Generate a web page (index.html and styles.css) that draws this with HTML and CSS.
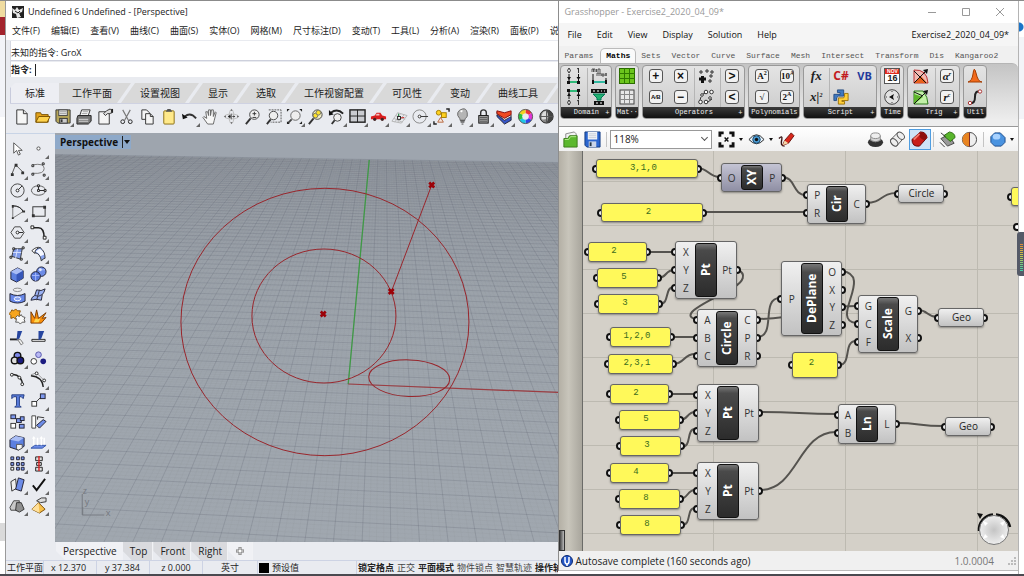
FILE: index.html
```html
<!DOCTYPE html>
<html lang="en">
<head>
<meta charset="utf-8">
<title>Undefined 6 Undefined - [Perspective]</title>
<link rel="stylesheet" href="styles.css">
</head>
<body>
<div class="desktop">
<div class="edge edge-left"><i class="chip tan"></i><i class="chip red"></i><i class="chip pale"></i><i class="fill"></i><i class="chip grey"></i></div>

<main class="rhino">
  <header class="titlebar">
    <svg class="logo" viewBox="0 0 14 14"><rect x="1" y="1" width="12" height="12" fill="#222"/><path d="M1 3l3 2 2-3 2 3 4-2-1 4-3 1 2 4-4 1-1-4-3-1z" fill="#e8e8e8"/><path d="M4 6l3 2 2-2M3 11l2-2M9 10l3 2" stroke="#222" fill="none"/></svg>
    <span>Undefined 6 Undefined - [Perspective]</span>
  </header>
  <nav class="menu">
    <button>文件(F)</button><button>编辑(E)</button><button>查看(V)</button><button>曲线(C)</button><button>曲面(S)</button><button>实体(O)</button><button>网格(M)</button><button>尺寸标注(D)</button><button>变动(T)</button><button>工具(L)</button><button>分析(A)</button><button>渲染(R)</button><button>面板(P)</button><button>说明(H)</button>
  </nav>
  <section class="command">
    <p class="history">未知的指令: GroX</p>
    <div class="prompt"><label for="cmd">指令:</label><i class="caret"></i><input id="cmd" type="text"></div>
  </section>
  <nav class="tabs">
    <button class="tab on">标准</button><button class="tab first">工作平面</button><button class="tab">设置视图</button><button class="tab">显示</button><button class="tab">选取</button><button class="tab">工作视窗配置</button><button class="tab">可见性</button><button class="tab">变动</button><button class="tab">曲线工具</button><button class="tab">曲面工具</button>
  </nav>
  <div class="toolbar">
    <button aria-label="New"><svg viewBox="0 0 18 18"><path d="M4 2h7l4 4v11H4z" fill="#f6f6f6" stroke="#333"/><path d="M11 2v4h4" fill="#ddd" stroke="#333"/></svg></button>
    <button aria-label="Open"><svg viewBox="0 0 18 18"><path d="M2 5h5l1 2h7v8H2z" fill="#e3a21a" stroke="#7a5200"/><path d="M5 9h12l-3 6H2z" fill="#ffd34d" stroke="#7a5200"/></svg></button>
    <button aria-label="Save" class="more"><svg viewBox="0 0 18 18"><path d="M1 2h15v14H3l-2-2z" fill="#b5a55a" stroke="#333"/><rect x="4" y="2" width="9" height="6" fill="#e9e9e9" stroke="#444"/><path d="M5 4h7M5 6h7" stroke="#999"/><rect x="5" y="11" width="8" height="5" fill="#ccc" stroke="#333"/><path d="M7 12v3" stroke="#333" stroke-width="2"/></svg></button>
    <button aria-label="Print"><svg viewBox="0 0 18 18"><path d="M6 2h9l-2 6H4z" fill="#fff" stroke="#333"/><path d="M2 8h14v6l-3 3H1v-6z" fill="#777" stroke="#222"/><path d="M3 12h10M3 14h10" stroke="#ddd"/><path d="M7 4h6M6 6h6" stroke="#999"/></svg></button>
    <button aria-label="Properties"><svg viewBox="0 0 18 18"><path d="M2 4h11v13H2z" fill="#f4f4f4" stroke="#333"/><path d="M7 6l3-3 4-2 2 2v2l-3 1-2 0-2 2z" fill="#ddd" stroke="#333"/><rect x="15" y="1" width="2" height="4" fill="#222"/></svg></button>
    <button aria-label="Cut"><svg viewBox="0 0 18 18"><path d="M5 2l6 11M13 2L7 13" stroke="#777" stroke-width="1.200"/><circle cx="5" cy="14.500" r="2" fill="none" stroke="#222"/><circle cx="13" cy="14.500" r="2" fill="none" stroke="#222"/></svg></button>
    <button aria-label="Copy"><svg viewBox="0 0 18 18"><path d="M3 2h5l3 3v7H3z" fill="#f5f5f5" stroke="#333"/><path d="M7 6h5l3 3v8H7z" fill="#f5f5f5" stroke="#333"/><path d="M12 6v3h3" fill="none" stroke="#333"/></svg></button>
    <button aria-label="Paste"><svg viewBox="0 0 18 18"><rect x="4" y="3" width="11" height="14" rx="1" fill="#ffe98a" stroke="#8a6d10"/><path d="M6 4l2-3h3l2 3z" fill="#555"/></svg></button>
    <button aria-label="Undo" class="more"><svg viewBox="0 0 18 18"><path d="M4 9Q10 4 16 11" fill="none" stroke="#333" stroke-width="2"/><path d="M1 6l1 6 5-2z" fill="#111"/></svg></button>
    <button aria-label="Pan"><svg viewBox="0 0 18 18"><path d="M6 17l-5-7 1-1 3 2-1-7 2 0 1 4 0-6h2l0 6 1-6h2l0 7 2-5 1 1-2 8-1 4z" fill="#f6f6f6" stroke="#666"/></svg></button>
    <button aria-label="Rotate view"><svg viewBox="0 0 18 18"><ellipse cx="9" cy="9" rx="7.500" ry="2.500" fill="none" stroke="#bbb"/><ellipse cx="9" cy="9" rx="2.500" ry="7.500" fill="none" stroke="#bbb"/><path d="M9 6v6M6 9h6" stroke="#777"/><path d="M5 9l3-2v4zM13 9l-2-1v2z" fill="#222"/><path d="M1 9l2-1v2zM17 9l-2-1v2zM9 1l1 2-2 0zM9 17l-1-2h2z" fill="#555"/></svg></button>
    <button aria-label="Zoom"><svg viewBox="0 0 18 18"><circle cx="11" cy="7" r="5" fill="#eee" stroke="#444"/><path d="M7 11l-5 6" stroke="#333" stroke-width="2"/><path d="M9 6h4M11 4v4M9 10h4" stroke="#333"/></svg></button>
    <button aria-label="Zoom window"><svg viewBox="0 0 18 18"><path d="M4 2h13v13H6" fill="none" stroke="#555" stroke-dasharray="2 1"/><circle cx="9" cy="8" r="4.500" fill="#eee" stroke="#444"/><path d="M6 12l-4 5" stroke="#333" stroke-width="2"/></svg></button>
    <button aria-label="Zoom extents" class="more"><svg viewBox="0 0 18 18"><circle cx="10" cy="8" r="5" fill="#eee" stroke="#666"/><path d="M6 12l-4 4" stroke="#444" stroke-width="2"/><path d="M1 4V1h3zM17 4V1h-3zM1 14v3h3zM17 14v3h-3z" fill="#222"/></svg></button>
    <button aria-label="Zoom selected"><svg viewBox="0 0 18 18"><circle cx="11" cy="7" r="5" fill="#f2eec8" stroke="#444"/><circle cx="9" cy="8" r="2.500" fill="#fde12d" stroke="#776"/><circle cx="12" cy="5" r="2.500" fill="#fde12d" stroke="#776"/><path d="M7 11l-5 6" stroke="#333" stroke-width="2"/></svg></button>
    <button aria-label="Undo view" class="more"><svg viewBox="0 0 18 18"><path d="M3 5Q10 0 16 6" fill="none" stroke="#222" stroke-width="2"/><path d="M1 2v6l5-1z" fill="#111"/><circle cx="10" cy="10" r="4" fill="#eee" stroke="#444"/><path d="M7 13l-3 4" stroke="#333" stroke-width="2"/></svg></button>
    <button aria-label="Four views" class="more"><svg viewBox="0 0 18 18"><rect x="1" y="2" width="16" height="13" fill="#c9cbd0" stroke="#222" stroke-width="1.500"/><path d="M9 2v13M1 8.500h16" stroke="#222"/></svg></button>
    <button aria-label="Right view" class="more"><svg viewBox="0 0 18 18"><path d="M1 9l4-1 2-3h4l2 3 4 1v3H1z" fill="#d91e1e"/><path d="M7 6h3v2H6z" fill="#f5c3c3"/><circle cx="5" cy="12" r="1.700" fill="#422"/><circle cx="13" cy="12" r="1.700" fill="#422"/></svg></button>
    <button aria-label="Named CPlane" class="more"><svg viewBox="0 0 18 18"><path d="M1 14L7 5l10 3-6 8zM3 11l9 4M5 8l10 4M10 6l-6 9M14 7l-7 8" fill="none" stroke="#b5b5b5"/><path d="M8 10V6" stroke="#1a8a3a"/><path d="M8 11l6-1" stroke="#c22"/><rect x="7" y="9" width="3" height="3" fill="#fff" stroke="#222"/></svg></button>
    <button aria-label="Osnap" class="more"><svg viewBox="0 0 18 18"><circle cx="8" cy="9" r="7" fill="none" stroke="#888"/><circle cx="8" cy="9" r="1.500" fill="#fff" stroke="#333"/><path d="M9 9h8" stroke="#333"/></svg></button>
    <button aria-label="Select" class="more"><svg viewBox="0 0 18 18"><circle cx="6" cy="5" r="2.500" fill="#ffd21f" stroke="#a37a00"/><rect x="9" y="5" width="5" height="5" fill="#ffd21f" stroke="#a37a00"/><path d="M5 15l3-5 3 5z" fill="#f8e9df" stroke="#b5653d"/><path d="M14 1h3v3M1 14v3h3" fill="none" stroke="#222" stroke-width="1.500"/></svg></button>
    <button aria-label="Show" class="more"><svg viewBox="0 0 18 18"><path d="M6 11Q3 8 4 5t5-4 5 4-2 6l-1 3H7z" fill="#b5b5b5" stroke="#666"/><path d="M7 13h4M7 15h4M8 17h2" stroke="#444"/><path d="M7 4Q8 3 9 3" stroke="#fff" stroke-width="2"/></svg></button>
    <button aria-label="Lock" class="more"><svg viewBox="0 0 18 18"><path d="M6 8V5q0-3 3-3t3 3v3" fill="none" stroke="#333" stroke-width="1.500"/><rect x="4" y="8" width="10" height="8" fill="#a5a5a5" stroke="#111"/><path d="M5 10h8M5 12h8M5 14h8" stroke="#555"/></svg></button>
    <button aria-label="Layers" class="more"><svg viewBox="0 0 18 18"><path d="M1 9l8 8 7-4V9l-7 4-8-6z" fill="#3656c8" stroke="#223"/><path d="M1 6l8 7 7-4V7l-7 3-8-6z" fill="#f4f4f4" stroke="#445"/><path d="M1 3l8 2 7-2v4l-7 4-8-5z" fill="#f04a22" stroke="#811"/></svg></button>
    <button aria-label="Material" class="more"><svg viewBox="0 0 18 18"><g fill="none" stroke-width="4"><path d="M9 3.500A5.500 5.500 0 0 1 13.800 6.200" stroke="#e33"/><path d="M13.800 6.200A5.500 5.500 0 0 1 13.800 11.800" stroke="#e334d8"/><path d="M13.800 11.800A5.500 5.500 0 0 1 9 14.500" stroke="#3344e8"/><path d="M9 14.500A5.500 5.500 0 0 1 4.200 11.800" stroke="#1cc8e8"/><path d="M4.200 11.800A5.500 5.500 0 0 1 4.200 6.200" stroke="#2bc23a"/><path d="M4.200 6.200A5.500 5.500 0 0 1 9 3.500" stroke="#f2d21f"/></g><circle cx="9" cy="9" r="7.500" fill="none" stroke="#555"/></svg></button>
    <button aria-label="Render"><svg viewBox="0 0 18 18"><circle cx="9" cy="9" r="7" fill="#888" stroke="#222"/><path d="M9 2a7 7 0 0 1 0 14q4-7 0-14z" fill="#444"/><path d="M6 4q-3 3-2 8 5 1 6-2T9 3z" fill="#ddd"/><path d="M2 9h14M9 2v14" stroke="#555"/></svg></button>
  </div>
  <div class="work">
    <aside class="side">
      <button aria-label="Pointer"><svg viewBox="0 0 18 18"><path d="M5 3v11l3-3 2 5 2-1-2-4h4z" fill="#fff" stroke="#555"/></svg></button>
      <button aria-label="Point" class="more"><svg viewBox="0 0 18 18"><circle cx="9" cy="9" r="1.700" fill="#fff" stroke="#555"/></svg></button>
      <button aria-label="Polyline" class="more"><svg viewBox="0 0 18 18"><path d="M3 14L7 4l8 8" fill="none" stroke="#555"/><path d="M2 13h3v3H2zM6 3h3v3H6zM13 11h3v3h-3z" fill="#333"/></svg></button>
      <button aria-label="Curve" class="more"><svg viewBox="0 0 18 18"><path d="M3 4q12-2 12 4t-12 5" fill="none" stroke="#777"/><g fill="#fff" stroke="#222"><path d="M2 4h2v2H2zM13 2h2v2h-2zM2 13h2v2H2zM14 14h2v2h-2z"/></g></svg></button>
      <button aria-label="Circle" class="more"><svg viewBox="0 0 18 18"><circle cx="9" cy="9" r="7" fill="none" stroke="#444"/><path d="M9 9l5-5" stroke="#222"/><circle cx="9" cy="9" r="1.500" fill="#fff" stroke="#222"/></svg></button>
      <button aria-label="Ellipse" class="more"><svg viewBox="0 0 18 18"><ellipse cx="9" cy="9" rx="7.500" ry="5" fill="none" stroke="#555"/><path d="M9 4v5h7" fill="none" stroke="#222"/><g fill="#fff" stroke="#222"><path d="M8 3h2v2H8zM8 8h2v2H8zM15 8h2v2h-2z"/></g></svg></button>
      <button aria-label="Arc" class="more"><svg viewBox="0 0 18 18"><path d="M4 3q8 0 11 6L4 16z" fill="none" stroke="#777"/><path d="M4 3q8 0 11 6" fill="none" stroke="#222"/><path d="M3 2h2v3H3zM14 8h3v2h-3zM3 15h2v2H3z" fill="#333"/></svg></button>
      <button aria-label="Rectangle" class="more"><svg viewBox="0 0 18 18"><rect x="3" y="4" width="13" height="10" fill="none" stroke="#333"/><path d="M2 12h3v3H2zM14 3h3v3h-3z" fill="#333"/></svg></button>
      <button aria-label="Polygon" class="more"><svg viewBox="0 0 18 18"><path d="M6 3h6l4 6-4 6H6L2 9z" fill="none" stroke="#444"/><path d="M9 9h6" stroke="#222"/><circle cx="9" cy="9" r="1.500" fill="#fff" stroke="#222"/></svg></button>
      <button aria-label="Fillet" class="more"><svg viewBox="0 0 18 18"><path d="M3 4h6q6 0 6 11" fill="none" stroke="#222" stroke-width="1.700"/><g fill="#fff" stroke="#222"><path d="M1 2h3v3H1zM14 13h3v3h-3z"/></g></svg></button>
      <button aria-label="Surface points" class="more"><svg viewBox="0 0 18 18"><path d="M5 4l9 0-2 11-9-3z" fill="#7f9ae8" stroke="#333"/><path d="M4 8h9M9 4L7 14" stroke="#dbe4ff"/><g fill="#fff" stroke="#222"><path d="M4 3h2v2H4zM14 2h2v2h-2zM1 12h2v2H1zM12 14h2v2h-2z"/></g></svg></button>
      <button aria-label="Surface edges" class="more"><svg viewBox="0 0 18 18"><path d="M2 6q5-5 9-3-5 1-6 6z" fill="#fff" stroke="#333"/><path d="M11 3q5 4 5 11-2 0-4 3-1-8-7-9 1-5 6-5z" fill="#8aa4ee" stroke="#333"/><path d="M10 4q4 2 5 6l-4 2q-1-3-5-5z" fill="#f6f8ff"/></svg></button>
      <button aria-label="Box" class="more"><svg viewBox="0 0 18 18"><path d="M2 6l7-4 6 3v8l-7 4-6-3z" fill="#5d80e0" stroke="#223"/><path d="M2 6l6 3 7-4-6-3z" fill="#a9bdf5"/><path d="M8 9v8l7-4V5z" fill="#3656b8"/></svg></button>
      <button aria-label="Sphere" class="more"><svg viewBox="0 0 18 18"><circle cx="12" cy="6" r="5" fill="#6c8be6" stroke="#223"/><circle cx="6" cy="11" r="5" fill="#5878dc" stroke="#223"/><path d="M2 10h8M6 7v9M9 4h7" stroke="#a9bcff"/><circle cx="11" cy="4" r="1.500" fill="#dfe7ff"/></svg></button>
      <button aria-label="Extract" class="more"><svg viewBox="0 0 18 18"><ellipse cx="9" cy="3" rx="4.500" ry="1.800" fill="#eee" stroke="#888"/><path d="M1 7q8 4 16 0v8q-8 4-16 0z" fill="#6888e8" stroke="#223"/><ellipse cx="9" cy="12.500" rx="3.500" ry="2" fill="#8aa4ee" stroke="#fff"/></svg></button>
      <button aria-label="Patch" class="more"><svg viewBox="0 0 18 18"><path d="M1 14q1-4 4-5l2-6q5 2 9-1-1 4-3 6l-1 6q-5-2-11 0z" fill="#9ab1f4" stroke="#223"/><path d="M5 9q4 2 8-1M10 3L7 14" stroke="#334" fill="none"/></svg></button>
      <button aria-label="Explode group"><svg viewBox="0 0 18 18"><path d="M3 2l2 1 2-2 2 2 3 0-1 3 1 3-3 0-2 3-2-2-3 1 0-3-2-2 2-2z" fill="#f7a51d" stroke="#854f00"/><path d="M9 8l2 1 2-2 1 2 3 1-1 2 1 3-3 0-2 2-2-2-3 0 1-3-1-2z" fill="#f8f8f8" stroke="#555"/></svg></button>
      <button aria-label="Explode"><svg viewBox="0 0 18 18"><path d="M1 16V4l4 7 2-9 2 9 8-6-4 6 4-1-5 6z" fill="#f98f0c" stroke="#7a3a00"/><path d="M4 15l2-4 2 1 3-1-2 4z" fill="#ffd84d"/></svg></button>
      <button aria-label="Trim"><svg viewBox="0 0 18 18"><path d="M1 11h9" stroke="#222" stroke-width="2"/><path d="M9 2h5l-3 8-3 2z" fill="#2746a0"/><path d="M9 11l3 0 3 4-2 2z" fill="#eee" stroke="#777"/></svg></button>
      <button aria-label="Split"><svg viewBox="0 0 18 18"><path d="M2 13h14v-2H2z" fill="#fff" stroke="#222"/><path d="M9 2h6l-3 8-3 2z" fill="#2746a0"/></svg></button>
      <button aria-label="Join" class="more"><svg viewBox="0 0 18 18"><g stroke="#111" stroke-width="1.500"><circle cx="9" cy="6" r="3.500" fill="#7d88e8"/><circle cx="6" cy="11" r="3.500" fill="#ddd"/><circle cx="12" cy="11" r="3.500" fill="#1b1b80"/></g></svg></button>
      <button aria-label="Group"><svg viewBox="0 0 18 18"><circle cx="9" cy="5" r="3" fill="#b8b8f4" stroke="#55a"/><circle cx="4" cy="12" r="3" fill="#fff" stroke="#333"/><circle cx="14" cy="12" r="3" fill="#1b1b80"/></svg></button>
      <button aria-label="Edit points"><svg viewBox="0 0 18 18"><path d="M2 4q10-2 13 11" fill="none" stroke="#222" stroke-width="1.500"/><g fill="#fff" stroke="#222"><circle cx="3" cy="4" r="1.500"/><circle cx="11" cy="7" r="1.500"/><circle cx="14" cy="14" r="1.500"/></g></svg></button>
      <button aria-label="Control points" class="more"><svg viewBox="0 0 18 18"><path d="M1 5q12 1 13 12" fill="none" stroke="#222" stroke-width="1.500"/><path d="M1 4l6-2 8 8" fill="none" stroke="#999"/><g fill="#fff" stroke="#222"><circle cx="7" cy="2.500" r="1.500"/><circle cx="15" cy="10" r="1.500"/></g></svg></button>
      <button aria-label="Text"><svg viewBox="0 0 18 18"><path d="M3 3h13l-1 4-2-2h-2v9l2 2H6l2-2V5H5L3 7z" fill="#5d80e0" stroke="#223a80"/></svg></button>
      <button aria-label="Move" class="more"><svg viewBox="0 0 18 18"><path d="M6 11l5-5" stroke="#333"/><rect x="2" y="10" width="5" height="5" fill="#fff" stroke="#333"/><rect x="11" y="2" width="5" height="5" fill="#7d98ee" stroke="#223"/></svg></button>
      <button aria-label="Array"><svg viewBox="0 0 18 18"><g fill="#7d98ee" stroke="#223"><rect x="2" y="2" width="5" height="4"/><rect x="8" y="6" width="5" height="4"/><rect x="12" y="4" width="4" height="4"/><rect x="11" y="12" width="5" height="4"/></g><rect x="2" y="11" width="5" height="5" fill="#fff" stroke="#333"/></svg></button>
      <button aria-label="Orient"><svg viewBox="0 0 18 18"><path d="M2 3h4v13H2z" fill="#fff" stroke="#444"/><path d="M8 4l7 1M8 4v3" stroke="#333"/><path d="M7 13l7-6 3 2-7 7z" fill="#6d8ce8" stroke="#223"/></svg></button>
      <button aria-label="Solid edit" class="more"><svg viewBox="0 0 18 18"><path d="M1 6l6-4 9 2v9l-6 4-9-3z" fill="#5d80e0" stroke="#223"/><path d="M1 6l9 2 6-4-9-2z" fill="#a9bdf5"/><path d="M8 11h6v4l-4 2-2-1z" fill="#f4f4f4" stroke="#555"/></svg></button>
      <button aria-label="Extrude" class="more"><svg viewBox="0 0 18 18"><path d="M1 15l4-3h12l-4 3z" fill="#6d8ce8" stroke="#35a"/><path d="M4 12V4M8 12V4M12 12V4M15 11V4" stroke="#fff" stroke-width="1.500"/><path d="M2 5l2-3 2 3zM10 5l2-3 2 3z" fill="#fff"/></svg></button>
      <button aria-label="Grid array" class="more"><svg viewBox="0 0 18 18"><g fill="#7d98ee" stroke="#223"><path d="M2 2h3v3H2zM8 2h3v3H8zM13 2h3v3h-3zM2 8h3v3H2zM8 8h3v3H8zM13 8h3v3h-3zM8 13h3v3H8zM13 13h3v3h-3z"/></g><path d="M2 13h3v3H2z" fill="#fff" stroke="#222"/></svg></button>
      <button aria-label="Align" class="more"><svg viewBox="0 0 18 18"><g fill="#ddd" stroke="#222"><path d="M6 2h7v4H6zM7 8h5v3H7zM6 13h7v4H6z"/></g><path d="M9.500 1v16" stroke="#d22" stroke-width="1.500"/></svg></button>
      <button aria-label="Flow" class="more"><svg viewBox="0 0 18 18"><path d="M2 6l5-3 1 10-5 3z" fill="#eee" stroke="#333"/><path d="M10 2l6 2-3 12-6-2z" fill="#6d8ce8" stroke="#223"/></svg></button>
      <button aria-label="Check" class="more"><svg viewBox="0 0 18 18"><path d="M3 10l4 5 9-12" fill="none" stroke="#111" stroke-width="2"/></svg></button>
      <button aria-label="Mesh" class="more"><svg viewBox="0 0 18 18"><path d="M1 11l4-7 6 0-2 10-7 0z" fill="#c8c8c8" stroke="#444"/><path d="M8 6l5 0 3 7-5 3-4-2z" fill="#8f8f8f" stroke="#333"/></svg></button>
      <button aria-label="Dimension" class="more"><svg viewBox="0 0 18 18"><path d="M2 13l7-7 7 7-6 4z" fill="#f7c04a" stroke="#7a4a00"/><path d="M9 6l1 11-8-4z" fill="#ffe09a"/><path d="M7 4l5-3h5v4l-6 1z" fill="#ddd" stroke="#333"/></svg></button>
    </aside>
    <section class="view">
      <svg class="scene" viewBox="55 133 504 409" preserveAspectRatio="xMidYMid slice">
        <defs><linearGradient id="ground" x2="0" y2="1"><stop offset="0" stop-color="#979da5"/><stop offset=".35" stop-color="#9da4ac"/><stop offset="1" stop-color="#a0a7af"/></linearGradient></defs>
        <rect x="55" y="133" width="504" height="409" fill="#9ea5ae"/>
        <path d="M55 155L559 163V542H55z" fill="url(#ground)"/>
        <path id="minor" class="minor"/><path id="major" class="major"/>
        <path d="M348.500 384L369.500 160" stroke="#3f9a45" stroke-width="1.300"/>
        <path d="M348.500 384L559 392.500" stroke="#9c3d42" stroke-width="1.200"/>
        <g fill="none" stroke="#99262c" stroke-width="1">
          <ellipse cx="325.200" cy="322" rx="144" ry="133.700"/>
          <ellipse cx="324.200" cy="316" rx="72" ry="67"/>
          <ellipse cx="409.500" cy="378.200" rx="40.500" ry="18.300" transform="rotate(2 409 378)"/>
          <path d="M432 185L391.500 292"/>
        </g>
        <path d="M429.500 182.500l5 5m0-5l-5 5M389 289l5 5m0-5l-5 5M321 311.500l5 5m0-5l-5 5" stroke="#9c0208" stroke-width="2.600"/>
        <path d="M82.500 494v21h22M83 515v-8" fill="none" stroke="#777b82"/>
        <g class="axis"><text x="83" y="494">z</text><text x="85" y="505">y</text><text x="106" y="516">x</text></g>
      </svg>
      <button class="viewname">Perspective<i></i><svg viewBox="0 0 6 4"><path d="M0 0h6L3 4z" fill="#111"/></svg></button>
    </section>
  </div>
  <nav class="viewtabs"><button class="on">Perspective</button><button>Top</button><button>Front</button><button>Right</button><button class="plus" aria-label="Add"><svg viewBox="0 0 8 8"><path d="M3 0h2v3h3v2H5v3H3V5H0V3h3z" fill="#fff" stroke="#777"/></svg></button></nav>
  <footer class="status">
    <span class="s1">工作平面</span><span class="s2">x 12.370</span><span class="s3">y 37.384</span><span class="s4">z 0.000</span><span class="s5">英寸</span><span class="s6"><i></i>预设值</span>
    <span class="snap"><b>锁定格点</b><em>正交</em><b>平面模式</b><em>物件锁点</em><em>智慧轨迹</em><b>操作轴</b></span>
  </footer>
</main>

<section class="gh">
  <header class="ghtitle"><span>Grasshopper - Exercise2_2020_04_09*</span>
    <button aria-label="Minimize"><svg viewBox="0 0 10 10"><path d="M1 5.500h8" stroke="#999"/></svg></button>
    <button aria-label="Maximize"><svg viewBox="0 0 10 10"><path d="M1.500 1.500h7v7h-7z" fill="none" stroke="#999"/></svg></button>
    <button aria-label="Close"><svg viewBox="0 0 10 10"><path d="M1 1l8 8M9 1L1 9" stroke="#999"/></svg></button>
  </header>
  <nav class="ghmenu"><button>File</button><button>Edit</button><button>View</button><button>Display</button><button>Solution</button><button>Help</button><span>Exercise2_2020_04_09*</span></nav>
  <nav class="ghtabs"><button>Params</button><button class="on">Maths</button><button>Sets</button><button>Vector</button><button>Curve</button><button>Surface</button><button>Mesh</button><button>Intersect</button><button>Transform</button><button>Dis</button><button>Kangaroo2</button></nav>
  <div class="ribbon">
    <section class="group g52"><div class="icons">
      <div class="col"><button aria-label="Bounds"><svg viewBox="0 0 16 16"><path d="M3 0q-3 2.500 0 5 3-2.500 0-5M12.500 0v5M11 1l1.500-1" fill="none" stroke="#333"/><path d="M3 6v7M12.500 6v7" stroke="#111"/><path d="M1 9l2 3 2-3zM10.500 9l2 3 2-3zM1 13h3v3H1zM11 13h3v3h-3z" fill="#111"/><path d="M4 14h7" stroke="#2fb878" stroke-width="2"/></svg></button><button aria-label="Consecutive domains"><svg viewBox="0 0 16 16"><path d="M3 11q-3 2.500 0 5 3-2.500 0-5M12.500 11v5M11 12l1.500-1" fill="none" stroke="#333"/><path d="M3 3v7M12.500 3v7" stroke="#111"/><path d="M1 7l2-3 2 3zM10.500 7l2-3 2 3zM1 0h3v3H1zM11 0h3v3h-3z" fill="#111"/><path d="M4 2h7" stroke="#2fb878" stroke-width="2"/></svg></button></div>
      <div class="col rule"><button aria-label="Min max"><svg viewBox="0 0 16 16"><path d="M1 4V1h3v3M2.500 1v3M5.500 1v3M7 4V1h2v3M6 8V5h4v3M8 5v3M11 8V6h2v2zM14 5l2 3M16 5l-2 3" fill="none" stroke="#333" stroke-width=".8"/><path d="M2 6v9M15 10v5" stroke="#111"/><path d="M1 12h2v4H1zM14 12h2v4h-2z" fill="#111"/><path d="M3 14h11" stroke="#2fb8a0" stroke-width="2"/></svg></button><button aria-label="Remap"><svg viewBox="0 0 16 16"><path d="M0 0h16v4H0zM3 12h10v4H3z" fill="#111"/><path d="M2 2h2M6 2h2M10 2h1M13 2h1M5 14h2M9 14h2" stroke="#fff"/><path d="M2 5h12l-4 4v2H6V9z" fill="#20b070" stroke="#075"/></svg></button></div>
    </div><h2>Domain<i>+</i></h2></section>
    <section class="group g24"><div class="icons"><div class="col"><button aria-label="Matrix"><svg viewBox="0 0 16 16"><rect width="16" height="16" fill="#6cc51d" stroke="#2b6b00" stroke-width="2"/><path d="M5.500 0v16M10.500 0v16M0 5.500h16M0 10.500h16" stroke="#2f7a00"/></svg></button><button aria-label="Matrix display"><svg viewBox="0 0 16 16"><rect x="1" y="1" width="14" height="14" fill="#e8e8e8" stroke="#444"/><path d="M5.500 1v14M10.500 1v14M1 5.500h14M1 10.500h14" stroke="#888"/></svg></button></div></div><h2>Mat··</h2></section>
    <section class="group g102"><div class="icons">
      <div class="col"><button class="key">+</button><button class="key small">A⁄B</button></div>
      <div class="col"><button class="key">×</button><button class="key">−</button></div>
      <div class="col rule"><button aria-label="Mass addition"><svg viewBox="0 0 16 16"><path d="M1 11h7M4.500 8v7" stroke="#111" stroke-width="3"/><path d="M1 4h4M3 2v4M7 3h4M9 1v4M12 4h4M14 2v4M11 8h4M13 6v4M10 13h4M12 11v4" stroke="#333"/></svg></button><button aria-label="Gate"><svg viewBox="0 0 16 16"><g fill="#fff" stroke="#333"><circle cx="8" cy="3" r="1.800"/><circle cx="13.500" cy="3" r="1.800"/><circle cx="4" cy="6" r="1.300"/><circle cx="2.500" cy="13" r="1.800"/><circle cx="8" cy="13" r="1.800"/><circle cx="12" cy="9" r="1.300"/></g><path d="M10 13l4-3M5 5l2-1M2 11l1-3" stroke="#333"/></svg></button></div>
      <div class="col rule"><button class="key">&gt;</button><button class="key">&lt;</button></div>
    </div><h2>Operators<i>+</i></h2></section>
    <section class="group g52"><div class="icons"><div class="col"><button class="key serif">A<sup>2</sup></button><button class="key serif">√</button></div><div class="col"><button class="key serif">10<sup>A</sup></button><button class="key serif">2<sup>A</sup></button></div></div><h2>Polynomials</h2></section>
    <section class="group g73"><div class="icons">
      <div class="col"><button class="fx">fx</button><button class="fx">x|<sup>2</sup></button></div>
      <div class="col rule"><button class="cs">C#</button><button aria-label="Python"><svg viewBox="0 0 18 18"><path d="M5 1h7v7H6l-2 2v3H1V6h7V4H5z" fill="#3f78c0" stroke="#234b80"/><path d="M13 5h4v8h-7v1h3v3H6v-7h6l1-2z" fill="#ffcf3a" stroke="#9a6f00"/></svg></button></div>
      <div class="col"><button class="vb">VB</button></div>
    </div><h2>Script<i>+</i></h2></section>
    <section class="group g24"><div class="icons"><div class="col"><button class="cal"><b>NOV</b>16</button><button aria-label="Clock"><svg viewBox="0 0 16 16"><circle cx="8" cy="8" r="7.300" fill="#e2e2e2" stroke="#444"/><path d="M8 2v1M8 13v1M2 8h1M13 8h1" stroke="#444"/><path d="M5 8l5-3-1 3 1 3z" fill="#111"/></svg></button></div></div><h2>Time</h2></section>
    <section class="group g53"><div class="icons"><div class="col"><button aria-label="Right trigonometry"><svg viewBox="0 0 16 16"><path d="M1 2q13-1 14 13H1z" fill="#f3b8b0" stroke="#b33"/><path d="M1 15L8 8l6 7z" fill="#e8601c"/><path d="M1 15L14 2M1 3l12 12" stroke="#111"/><path d="M15 1l-5 1 4 4z" fill="#111"/></svg></button><button aria-label="Triangle trigonometry"><svg viewBox="0 0 16 16"><path d="M1 2h9q5 6 5 13H1z" fill="#c2f0a8" stroke="#2c7a1a"/><path d="M1 5l9 3-9 7z" fill="#5db52a"/><path d="M1 15L14 2M1 3l9 4" stroke="#111"/><path d="M15 1l-5 1 4 4z" fill="#111"/></svg></button></div><div class="col rule"><button class="key greek">α<sup>r</sup></button><button class="key greek">r<sup>c</sup></button></div></div><h2>Trig<i>+</i></h2></section>
    <section class="group g24"><div class="icons"><div class="col"><button aria-label="Bell curve"><svg viewBox="0 0 16 16"><path d="M1 14q4-1 5-8 1-9 3-1 2 9 6 9z" fill="#f26a1b" stroke="#a33c00"/></svg></button><button aria-label="Interpolate"><svg viewBox="0 0 16 16"><path d="M3 14q5 1 5-6t5-5" fill="none" stroke="#222" stroke-width="2"/><circle cx="3" cy="14" r="1.700" fill="#fff" stroke="#a33"/><circle cx="13" cy="2.500" r="1.700" fill="#fff" stroke="#a33"/></svg></button></div></div><h2>Util</h2></section>
  </div>
  <div class="ghbar">
    <button aria-label="Open file"><svg viewBox="0 0 18 18"><path d="M4 3l9-2 2 2v12H4z" fill="#f2f2f2" stroke="#888"/><path d="M2 8h4l2-3h8v12H2z" fill="#5cb82e" stroke="#3a7a1a"/><path d="M3 9h4l2-3h6" fill="none" stroke="#b4ec8c"/></svg></button>
    <button aria-label="Save file"><svg viewBox="0 0 18 18"><path d="M1 1h16v16H3l-2-2z" fill="#2c66d0" stroke="#123a80"/><rect x="4" y="1" width="10" height="8" fill="#f2f4f8"/><path d="M5 3h8M5 5h8M5 7h8" stroke="#c9ced8"/><rect x="5" y="11" width="8" height="6" fill="#c9d4e8"/><path d="M7 12v4" stroke="#234" stroke-width="2"/></svg></button>
    <i class="sep"></i>
    <div class="combo"><select aria-label="Zoom"><option>118%</option></select></div>
    <button aria-label="Zoom extents"><svg viewBox="0 0 18 18"><path d="M2 6V2h4M12 2h4v4M16 12v4h-4M6 16H2v-4" fill="none" stroke="#111" stroke-width="3"/><path d="M7 7l4 4M11 7l-4 4" stroke="#111" stroke-width="1.500"/></svg></button><i class="drop"></i>
    <button aria-label="Named views"><svg viewBox="0 0 18 18"><path d="M1 9q8-10 16 0-8 9-16 0z" fill="#e6f2fb" stroke="#222"/><circle cx="9" cy="9" r="4" fill="#4b9bd2" stroke="#1c4a70"/><circle cx="9" cy="9" r="1.800" fill="#111"/></svg></button><i class="drop"></i>
    <button aria-label="Sketch"><svg viewBox="0 0 18 18"><path d="M1 8q4-4 3 1-2 7 3 7" fill="none" stroke="#311" stroke-width="1.500"/><path d="M5 15l2-5 7-8 3 3-6 8z" fill="#d9281c" stroke="#6b0f0a"/><path d="M5 15l2-5 4 3z" fill="#f4d7a8"/></svg></button>
    <span class="push"></span>
    <button aria-label="No preview"><svg viewBox="0 0 18 18"><ellipse cx="9" cy="12" rx="8" ry="5" fill="#333"/><path d="M4 5v5q5 3 10 0V5z" fill="#d5d5d5" stroke="#888"/><ellipse cx="9" cy="5" rx="5" ry="3" fill="#eee" stroke="#888"/></svg></button>
    <button aria-label="Wireframe preview"><svg viewBox="0 0 18 18"><g fill="#eee" stroke="#555"><path d="M2 9l8-8 6 6-8 9q-7 0-6-7z"/><ellipse cx="12.500" cy="5" rx="3" ry="4.500" transform="rotate(-45 12.500 5)"/><ellipse cx="5.500" cy="12" rx="3" ry="4.500" transform="rotate(-45 5.500 12)"/></g></svg></button>
    <button aria-label="Shaded preview" class="sel"><svg viewBox="0 0 18 18"><path d="M1 9l9-8q6 0 7 6l-8 9q-8 1-8-7z" fill="#c81e1a" stroke="#600"/><ellipse cx="12.500" cy="5.500" rx="3" ry="4.500" transform="rotate(-45 12.500 5.500)" fill="#8e0e0c"/><path d="M3 9l6-6" stroke="#f47a70" stroke-width="2"/></svg></button>
    <i class="sep"></i>
    <button aria-label="Selected preview"><svg viewBox="0 0 18 18"><path d="M2 8l7 8 7-3-6-9z" fill="#999" stroke="#444"/><path d="M5 5l6-4q6 1 6 6l-5 4z" fill="#58b52b" stroke="#2c6b10"/><path d="M2 2l5 4M1 12l5 5" stroke="#333"/></svg></button>
    <button aria-label="Preview settings"><svg viewBox="0 0 18 18"><circle cx="9" cy="9" r="7.500" fill="#eee" stroke="#444"/><path d="M9 1.500a7.500 7.500 0 0 0 0 15z" fill="#e88420"/><path d="M9 1.500v15" stroke="#722"/></svg></button>
    <i class="sep"></i>
    <button aria-label="Preview mesh"><svg viewBox="0 0 18 18"><path d="M6 2h6l5 5v5l-4 4H6l-4-4V6z" fill="#4a93e0" stroke="#1b4a8a"/><ellipse cx="8" cy="6" rx="4" ry="3" fill="#a8d2ff"/></svg></button><i class="drop"></i>
  </div>
  <div class="canvas">
    <svg class="wires" viewBox="559 151 459 400">
      <path d="M698 168C710 168 709 177 721 177M783 177C797 177 793 195 807 195M704 212H807M867 203C884 203 881 193 898 193"/>
      <path d="M648 252H675M659 278C668 278 666 270 675 270M661 304C671 304 665 287 675 287"/>
      <path d="M739 270C748 274 744 282 735 287L713 299C704 304 682 315 696 319"/>
      <path d="M672 337H696M674 364C686 364 684 354 696 354M758 319C800 319 815 306 857 306M758 337C778 337 761 298 781 298"/>
      <path d="M843 271C875 275 830 320 857 323M840 365C853 365 844 341 857 341M919 310C929 310 928 317 938 317"/>
      <path d="M670 394H696M681 420C689 420 688 412 696 412M683 447C693 447 687 429 696 429"/>
      <path d="M761 412C800 412 800 414 837 414M761 490C799 490 799 432 837 432M898 423C920 423 920 426 944 426"/>
      <path d="M670 473H696M681 499C689 499 688 490 696 490M683 525C693 525 687 508 696 508"/>
    </svg>
    <div class="panel long p1">3,1,0</div><div class="panel long p2">2</div>
    <div class="panel p3">2</div><div class="panel p4">5</div><div class="panel p5">3</div>
    <div class="panel p6">1,2,0</div><div class="panel p7">2,3,1</div><div class="panel p8">2</div>
    <div class="panel p9">2</div><div class="panel p10">5</div><div class="panel p11">3</div>
    <div class="panel p12">4</div><div class="panel p13">8</div><div class="panel p14">8</div>
    <div class="panel p15"></div><i class="grip"></i>

    <div class="node violet n1"><div class="ins"><span>O</span></div><b>XY</b><div class="outs"><span>P</span></div></div>
    <div class="node n2"><div class="ins"><span>P</span><span>R</span></div><b>Cir</b><div class="outs"><span>C</span></div></div>
    <div class="node three n3"><div class="ins"><span>X</span><span>Y</span><span>Z</span></div><b>Pt</b><div class="outs"><span>Pt</span></div></div>
    <div class="node three n4"><div class="ins"><span>A</span><span>B</span><span>C</span></div><b>Circle</b><div class="outs"><span>C</span><span>P</span><span>R</span></div></div>
    <div class="node n5"><div class="ins"><span>P</span></div><b>DePlane</b><div class="outs"><span>O</span><span>X</span><span>Y</span><span>Z</span></div></div>
    <div class="node three n6"><div class="ins"><span>G</span><span>C</span><span>F</span></div><b>Scale</b><div class="outs"><span>G</span><span>X</span></div></div>
    <div class="node three n7"><div class="ins"><span>X</span><span>Y</span><span>Z</span></div><b>Pt</b><div class="outs"><span>Pt</span></div></div>
    <div class="node three n8"><div class="ins"><span>X</span><span>Y</span><span>Z</span></div><b>Pt</b><div class="outs"><span>Pt</span></div></div>
    <div class="node n9"><div class="ins"><span>A</span><span>B</span></div><b>Ln</b><div class="outs"><span>L</span></div></div>
    <div class="param m1">Circle</div><div class="param m2">Geo</div><div class="param m3">Geo</div>
    <svg class="compass" viewBox="0 0 36 36"><defs><radialGradient id="dial"><stop offset="0" stop-color="#c4c4c4"/><stop offset="1" stop-color="#eee"/></radialGradient></defs><path d="M3 20A15.500 15.500 0 0 1 17 3.500M20 3.500A15.500 15.500 0 0 1 34 16" fill="none" stroke="#111" stroke-width="2.500"/><path d="M1 2l6 1-3 5z" fill="#111"/><circle cx="18" cy="19" r="14.500" fill="url(#dial)" stroke="#777"/><path d="M7 10l5 2-3 3zM29 10l-5 2 3 3zM7 28l5-2-3-3zM29 28l-5-2 3-3z" fill="#fff"/></svg>
    <i class="thumb"></i>
  </div>
  <footer class="ghstatus"><svg viewBox="0 0 12 12"><circle cx="6" cy="6" r="5.500" fill="#2458c8" stroke="#0d2a70"/><path d="M4 2v4q0 3 2 3t2-3V2" fill="none" stroke="#fff" stroke-width="1.500"/><circle cx="6" cy="10" r="1" fill="#fff"/></svg><span>Autosave complete (160 seconds ago)</span><em>1.0.0004</em><svg class="size" viewBox="0 0 9 9"><path d="M7 1h2v2H7zM7 4h2v2H7zM7 7h2v2H7zM4 4h2v2H4zM4 7h2v2H4zM1 7h2v2H1z" fill="#bbb"/></svg></footer>
</section>

<div class="edge edge-right"><i class="chip white"></i><i class="chip pale"></i><i class="fill"></i></div>
<div class="meter"><i></i></div>
</div>
<script src="grid.js"></script>
</body>
</html>
```
FILE: styles.css
```css
*,*::before,*::after{box-sizing:border-box}
body{margin:0;font:9px/12px "Open Sans","Noto Sans CJK SC",sans-serif;color:#222;background:#fff}
button{font:inherit;color:inherit;background:none;border:0;padding:0;margin:0;white-space:nowrap}
button svg{display:block}
p,h2{margin:0}
i,em{font-style:normal}
.desktop{position:relative;display:flex;height:100vh;min-height:480px;border-top:1px solid #8b8b8b;border-bottom:2px solid #4a4a50;overflow:hidden}

/* slivers of the windows behind */
.edge{flex:0 0 6px;display:flex;flex-direction:column;background:#fff;overflow:hidden}
.edge-left{border-right:1px solid #9a9a9a}
.edge-right{border-left:1px solid #b4b4b4}
.chip{display:block}
.tan{height:16px;background:#f0dca0}
.red{height:18px;background:#a3242d}
.white{height:36px;background:radial-gradient(circle at 0 26px,#1c74c8 4px,#fff 5px)}
.pale{height:82px;background:#f3f4f8}
.grey{height:18px;margin-bottom:33px;background:#dadada}
.fill{flex:1}

/* modelling window */
.rhino{flex:553 1 0;min-width:0;display:flex;flex-direction:column;background:#e9ebf0;overflow:hidden}
.titlebar{height:21px;display:flex;align-items:center;gap:3px;padding-left:5px;background:#fff;font-size:9px}
.logo{width:14px;height:14px}
.menu{display:flex;gap:11px;height:18px;padding-left:6px;background:#fff;overflow:hidden;align-items:center}
.command{margin-top:1px;margin-left:4px;border-left:1px solid #d5d8e2}
.history{height:20px;line-height:24px;background:#fff;border-bottom:1px solid #cdd0dc}
.prompt{display:flex;align-items:center;height:15px;margin-top:1px;background:#fff;font-weight:bold}
.caret{width:1px;height:12px;margin-left:3px;background:#222}
.prompt input{flex:1;border:0;outline:0;height:12px;padding:0;font:inherit;background:none}
.tabs{display:flex;height:21px;margin:6px 0 0 4px;font-size:10px;line-height:20px;overflow:hidden;border-bottom:1px solid #cfd2e2}
.tab{flex:none;padding:0 19px 0 20px;margin-left:-11px;background:#d9d9d9;clip-path:polygon(15px 0,100% 0,calc(100% - 14px) 100%,1px 100%)}
.tab.on{background:#edeef3;margin:0;padding:0 14px;clip-path:polygon(0 5px,5px 0,100% 0,100% 100%,0 100%);border-left:1px solid #c8cbdc}
.tab.first{margin-left:0;padding-left:13px;clip-path:polygon(0 0,100% 0,calc(100% - 14px) 100%,0 100%)}
.toolbar{display:flex;height:29px;padding:2px 0 0 5px;overflow:hidden}
.toolbar button,.side button{position:relative;flex:none;width:21px;height:21px;padding:2px 1px}
.toolbar svg,.side svg{width:17px;height:17px;margin-left:1px}
.more::after{content:"";position:absolute;right:0;bottom:0;border:2px solid transparent;border-right-color:#666;border-bottom-color:#666}
.work{flex:1;min-height:0;display:flex}
.side{flex:0 0 49px;display:grid;grid-template-columns:21px 21px;grid-auto-rows:21px;align-content:start;padding:4px 1px 0;border-top:1px solid #c8d4e6}
.view{position:relative;flex:1;min-width:0;overflow:hidden}
.scene{display:block;width:100%;height:100%}
.minor{fill:none;stroke:#5d656f;stroke-opacity:.07;stroke-width:.6}
.major{fill:none;stroke:#555d68;stroke-opacity:.28;stroke-width:.8}
.axis{font:9px "Open Sans",sans-serif;fill:#73777e}
.viewname{position:absolute;left:0;top:2px;display:flex;align-items:center;gap:4px;height:14px;padding:0 1px 0 5px;background:#8ea9c9;color:#111;font-weight:bold;font-size:10px}
.viewname i{width:1px;height:12px;background:#222}
.viewname svg{width:6px;height:4px;margin-left:-3px}
.viewtabs{display:flex;height:18px;padding-left:50px;font-size:10px;line-height:18px}
.viewtabs button{padding:0 5px 0 7px;background:#d9dade;border-right:1px solid #f1f2f5;clip-path:polygon(0 0,100% 0,100% 100%,9px 100%,0 50%)}
.viewtabs .on,.viewtabs .plus{background:#f0f1f5}
.viewtabs .plus{padding:0 8px}
.viewtabs svg{width:8px;height:8px}
.status{display:flex;height:14px;line-height:14px;border-top:1px solid #cdd3e4;white-space:nowrap;overflow:hidden}
.status>span{flex:none;border-right:1px solid #cdd3e4;padding:0 1px}
.status .s1{width:38px}
.status .s2{width:53px;padding-left:7px}
.status .s3{width:53px;padding-left:8px}
.status .s4{width:53px;text-align:center}
.status .s5{width:55px;text-align:center}
.status .s6{width:99px;display:flex;gap:3px;align-items:center}
.s6 i{width:10px;height:10px;background:#000}
.status .snap{display:flex;gap:3px;border:0}
.snap em{color:#444}

/* node editor window */
.gh{flex:459 1 0;min-width:0;display:flex;flex-direction:column;background:#f0f0f0;margin-bottom:3px;border-left:1px solid #8d8d8d;overflow:hidden}
.ghtitle{display:flex;align-items:center;height:22px;padding-right:1px;padding-left:5px;background:#fff;color:#999}
.ghtitle span{flex:1}
.ghtitle button{width:34px;padding-left:12px}
.ghtitle svg{width:10px;height:10px}
.ghmenu{display:flex;align-items:center;gap:15px;height:23px;padding:0 9px 0 8px;color:#111;background:#f5f5f5}
.ghmenu span{margin-left:auto}
.ghtabs{display:flex;height:17px;padding:2px 0 0 5px;gap:11px;font:8px/14px "Liberation Mono",monospace;color:#555;overflow:hidden}
.ghtabs .on{background:#fafafa;color:#000;border:1px solid #bbb;border-bottom:0;border-radius:5px 5px 0 0;padding:0 5px;margin:0 -6px 0 -4px;font-weight:bold}
.ribbon{display:flex;gap:3px;height:63px;padding:1px 1px 0;border-top:1px solid #b5b5b5;border-radius:0 6px 0 0;background:linear-gradient(#c4c4c4,#ededed 90%)}
.group{display:flex;flex-direction:column;height:54px;border:1px solid #999;border-radius:4px;overflow:hidden;background:linear-gradient(#e4e4e4,#c9c9c9)}
.g24{flex:0 0 24px}.g52{flex:0 0 52px}.g53{flex:0 0 53px}.g73{flex:0 0 74px}.g102{flex:0 0 103px}
.icons{flex:1;display:flex;justify-content:space-around;padding-top:2px}
.col{display:flex;flex-direction:column;gap:5px;padding:0 3px}
.rule{border-left:1px solid #b5b5b5}
.col button,.col svg{width:16px;height:16px;flex:none}
.col .key{width:14px;height:14px;margin:1px;border:1px solid #555;border-radius:3px;background:#f2f2f2;color:#111;font:bold 12px/11px "Liberation Sans",sans-serif;overflow:hidden}
.col .small{font-size:6px}
.col .serif{font:bold 9px/11px "Liberation Serif",serif}
.col .greek{font:italic bold 11px/10px "Liberation Serif",serif}
.col sup{font-size:6px;line-height:4px;vertical-align:4px}
.col .fx{font:italic bold 13px/14px "Liberation Serif",serif}
.col .cs{font-weight:bold;font-size:12px;color:#c21b20}
.col .vb{font-weight:bold;font-size:11px;color:#233a9c}
.col .cal{border:1px solid #555;background:#fff;font:bold 9px/9px "Liberation Sans",sans-serif}
.cal b{display:block;background:#e02a1c;color:#fff;font-size:5px;line-height:5px}
.group h2{position:relative;height:11px;background:linear-gradient(#3a3a3a,#111);color:#eee;font:7px/10px "Liberation Mono",monospace;text-align:center;white-space:nowrap}
.group h2 i{position:absolute;right:2px;top:1px}
.ghbar{display:flex;align-items:center;height:25px;padding:0 1px 0 1px;border-top:1px solid #999;background:linear-gradient(#fff,#f0f0f0);overflow:hidden}
.ghbar button{flex:none;width:22px;height:21px;padding:2px}
.ghbar svg{width:17px;height:17px}
.ghbar .sel{border:1px solid #4f9de0;background:#cfe4f8;padding:1px}
.sep{width:1px;height:15px;background:#c4c4c4;margin:0 3px 0 2px}
.combo{position:relative;margin-right:4px}
.combo select{display:block;appearance:none;width:102px;height:19px;border:1px solid #999;border-radius:0;background:#fff;font:10px "Open Sans",sans-serif;color:#222;padding:0 2px}
.combo::after{content:"";position:absolute;right:5px;top:5px;width:5px;height:5px;border:solid #555;border-width:0 1px 1px 0;transform:rotate(45deg);pointer-events:none}
.drop{border:3px solid transparent;border-top-color:#111;border-bottom:0;margin:0 3px 0 1px;border-left-width:2px;border-right-width:2px}
.push{flex:1}
.canvas{position:relative;flex:1;min-height:0;isolation:isolate;overflow:hidden;
  background:
  linear-gradient(90deg,#b4b0a5,#c8c5bb 40%,#a9a69d 95%,#6b6b68 96%) 0 0/24px 100% no-repeat,
  linear-gradient(90deg,#bdbab1 1px,transparent 1px) 22px 0/132px 44px,
  linear-gradient(#bdbab1 1px,transparent 1px) 0 30px/132px 44px,#d4d0c8}
.wires{position:absolute;left:-1px;top:0;width:459px;height:400px;z-index:-2;fill:none;stroke:#55534f;stroke-width:2}
.panel,.node,.param{position:absolute;border:1px solid #666;border-radius:3px;box-shadow:0 1px 2px rgba(0,0,0,.35)}
.panel{width:61px;height:20px;background:#fff95a;color:#3a6b1c;font:9px/16px "Liberation Mono",monospace;text-align:center;padding-right:8px}
.panel.long{width:102px;height:19px}
.panel::before,.panel::after,.param::before,.param::after,.ins span::before,.outs span::after,.grip{content:"";position:absolute;z-index:-1;width:8px;height:8px;border:2px solid #111;border-radius:50%;background:#fff}
.panel::before,.param::before{left:-5px;top:5px}
.panel::after,.param::after{right:-5px;top:5px}
.node{display:flex;justify-content:space-between;padding:1px 0;background:linear-gradient(#f0f0f0,#c2c2c2);font:10px/12px "Open Sans",sans-serif;color:#333}
.violet{background:linear-gradient(#c4c4d4,#8f8fa4)}
.node b{flex:0 0 22px;border:1px solid #111;border-radius:3px;background:linear-gradient(0deg,#777,#4a4a4a 12%,#2c2c2c);color:#fff;font-size:12px;line-height:20px;writing-mode:vertical-rl;transform:rotate(180deg);text-align:center}
.ins,.outs{flex:1;display:flex;flex-direction:column;justify-content:space-around;text-align:center}
.ins span,.outs span{position:relative;display:block}
.ins span::before{left:-5px;top:2px}
.outs span::after{right:-5px;top:2px}
.param{width:46px;height:19px;background:linear-gradient(#f0f0f0,#c2c2c2);text-align:center;font:10px/16px "Open Sans",sans-serif;color:#222}
.three{height:58px;width:60px}
.p1{left:37px;top:8px}.p2{left:42px;top:52px}
.p3{left:29px;top:91px}.p4{left:38px;top:117px}.p5{left:39px;top:143px}
.p6{left:51px;top:176px}.p7{left:49px;top:203px;width:65px}
.panel.p8{left:233px;top:201px;width:46px;height:26px;line-height:20px}
.p8::before,.p8::after{top:8px}
.p9{left:51px;top:233px}.p10{left:60px;top:259px}.p11{left:61px;top:285px}
.p12{left:51px;top:312px}.p13{left:60px;top:338px}.p14{left:61px;top:364px}
.p3,.p9,.p12{width:59px}
.p15{left:452px;top:36px;height:19px}
.grip{left:454px;top:72px}
.n1{left:162px;top:12px;width:61px;height:29px}
.n2{left:248px;top:33px;width:59px;height:40px}
.n3{left:116px;top:90px;width:62px}
.n4{left:138px;top:158px}
.n5{left:222px;top:110px;width:61px;height:75px}
.n6{left:299px;top:144px}
.n7{left:138px;top:233px;width:62px}
.n8{left:138px;top:311px;width:62px}
.n9{left:279px;top:253px;width:58px;height:40px}
.m1{left:339px;top:33px}.m2{left:379px;top:157px}.m3{left:386px;top:266px}
.compass{position:absolute;right:6px;bottom:4px;width:36px;height:36px}
.thumb{position:absolute;left:0;bottom:0;width:6px;height:21px;border:1px solid #333;background:linear-gradient(90deg,#444,#bbb)}
.ghstatus{display:flex;align-items:center;gap:2px;height:20px;padding:0 2px;font-size:10px;background:#f0f0f0;border-bottom:1px solid #bbb}
.ghstatus svg{width:12px;height:12px}
.ghstatus span{flex:1}
.ghstatus em{color:#777;margin-right:11px}
.ghstatus .size{width:9px;height:9px}
.meter{position:absolute;right:0;top:231px;width:7px;height:44px;padding:12px 1px 4px 3px;border-radius:3px 0 0 3px;background:#555a68}
.meter i{display:block;height:28px;background:repeating-linear-gradient(transparent 0 1px,#555a68 1px 2px),linear-gradient(#e0873a,#c8c848 40%,#37d0b0)}
```
FILE: grid.js
```js
// Perspective construction-plane grid: world (X, Y) to view coordinates.
const origin = [348.5, 384], vanishX = [-9800, -3], vanishY = [384.8, -3];
const scaleX = -0.002, scaleY = 1 / 42;

function project(x, y) {
  const a = x * scaleX, b = y * scaleY, w = 1 + a + b;
  return [0, 1].map(k => ((origin[k] + a * vanishX[k] + b * vanishY[k]) / w).toFixed(2)).join(" ");
}

function gridPath(step, skip) {
  let d = "";
  for (let i = -60 / step; i <= 60 / step; i++) {
    if (skip && i % skip === 0) continue;
    d += `M${project(i * step, -18)}L${project(i * step, 58)}`;
  }
  for (let i = -18 / step; i <= 58 / step; i++) {
    if (skip && i % skip === 0) continue;
    d += `M${project(-60, i * step)}L${project(60, i * step)}`;
  }
  return d;
}

document.getElementById("major").setAttribute("d", gridPath(1, 0));
document.getElementById("minor").setAttribute("d", gridPath(0.25, 4));
```
